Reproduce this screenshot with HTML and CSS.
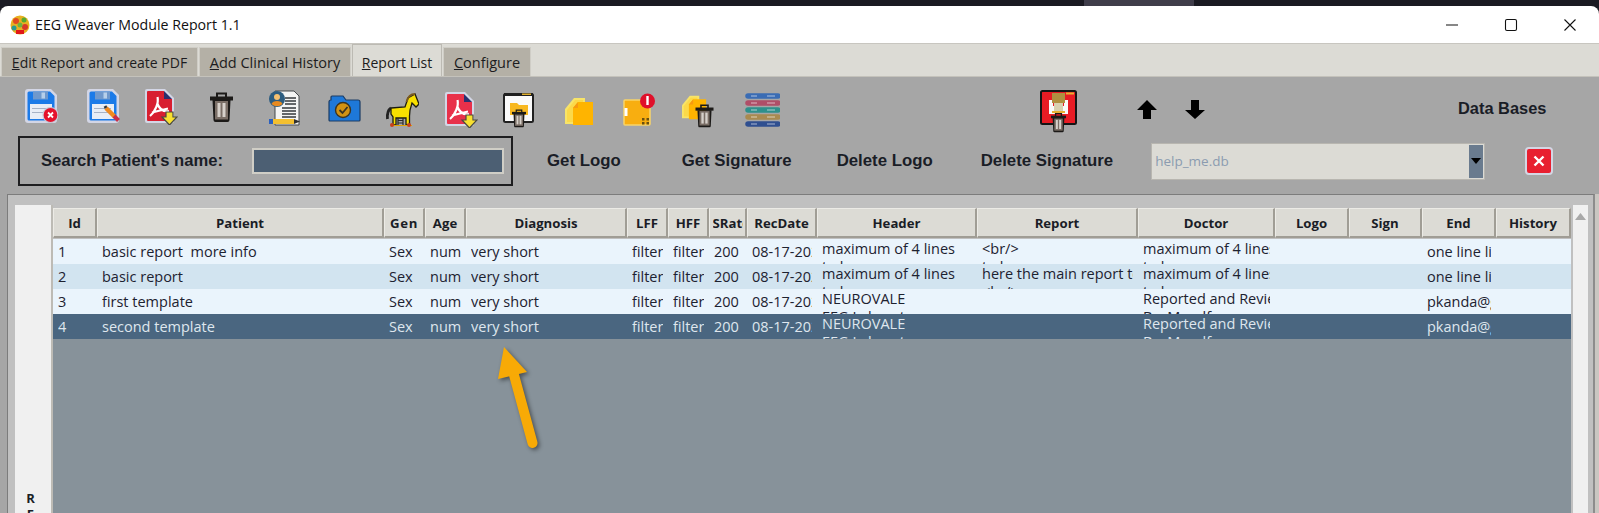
FILE: index.html
```html
<!DOCTYPE html>
<html lang="en">
<head>
<meta charset="utf-8">
<title>EEG Weaver Module Report 1.1</title>
<link rel="stylesheet" href="styles.css">
</head>
<body>
<svg class="defs" aria-hidden="true">
  <symbol id="trash" viewBox="0 0 23 30">
    <path d="M7 5V1.5h9V5" fill="none" stroke="#1c1a18" stroke-width="2"/>
    <rect x="0" y="4.5" width="23" height="4" fill="#1c1a18"/>
    <path d="M2.5 8h18l-1 20a2 2 0 0 1-2 2h-12a2 2 0 0 1-2-2z" fill="#1c1a18"/>
    <rect x="5" y="9" width="13" height="18.5" fill="#7a6e66"/>
    <rect x="7.5" y="11" width="3" height="14" fill="#d6d0ca"/>
    <rect x="12.5" y="11" width="3" height="14" fill="#d6d0ca"/>
  </symbol>
  <symbol id="floppy" viewBox="0 0 32 34">
    <path d="M3 0h23l6 6v25a3 3 0 0 1-3 3H3a3 3 0 0 1-3-3V3a3 3 0 0 1 3-3z" fill="#d3d6e6"/>
    <path d="M4 2.500h21l4.500 4.500v23a1.500 1.500 0 0 1-1.500 1.500H4a1.500 1.500 0 0 1-1.500-1.500V4a1.500 1.500 0 0 1 1.500-1.500z" fill="#1b7ae8"/>
    <rect x="8" y="2.500" width="15" height="8" fill="#6f98cc"/>
    <rect x="16.500" y="3.500" width="3.500" height="6" fill="#b6cfea"/>
    <rect x="5" y="15" width="22" height="15" fill="#e8edf6"/>
    <rect x="7" y="19" width="17" height="1" fill="#a6b2c6"/>
    <rect x="7" y="23" width="17" height="1" fill="#a6b2c6"/>
  </symbol>
  <symbol id="pdf" viewBox="0 0 33 36">
    <path d="M2 0h18l9 9v23a2 2 0 0 1-2 2H2a2 2 0 0 1-2-2V2a2 2 0 0 1 2-2z" fill="#d3d6e6"/>
    <path d="M3 2h16v8h8v21a1 1 0 0 1-1 1H3a1 1 0 0 1-1-1V3a1 1 0 0 1 1-1z" fill="currentColor"/>
    <path d="M19 2l8 8h-8z" fill="#2b2f6e"/>
    <path d="M5 27C10 23 14 14 12.500 8 M12.500 15C15 21 19 23 24 22 M7 23.500L23 19.500" fill="none" stroke="#fff" stroke-width="2.200"/>
    <path d="M21 23h7v5h4l-7.500 8L17 28h4z" fill="#f8e030" stroke="#4a4a40" stroke-width="1.200"/>
  </symbol>
  <symbol id="sheets" viewBox="0 0 29 29">
    <path d="M0 12L9 1h11v20L9 27H0z" fill="#f8e468"/>
    <path d="M2 13L10 3h8v16L9 25H2z" fill="#fbd94a"/>
    <path d="M8 11L13 5h15v23H8z" fill="#ffb400"/>
    <path d="M8 11l5-6v6z" fill="#f79a10"/>
  </symbol>
</svg>

<div class="topbar"><span class="pill"></span></div>

<div class="window">
  <header class="titlebar">
    <svg class="appicon" width="20" height="20" viewBox="0 0 20 20">
      <circle cx="10" cy="10" r="9.500" fill="#e8b020"/>
      <circle cx="6" cy="6" r="3" fill="#e04a20"/>
      <circle cx="14" cy="5" r="2.500" fill="#58a830"/>
      <circle cx="4" cy="13" r="2.500" fill="#2a9a90"/>
      <circle cx="15" cy="12" r="3" fill="#d83828"/>
      <circle cx="10" cy="10" r="2.500" fill="#70b040"/>
      <rect x="6" y="15" width="8" height="4" fill="#e01818"/>
    </svg>
    <span class="apptitle">EEG Weaver Module Report 1.1</span>
    <div class="winctl">
      <svg width="14" height="14" viewBox="0 0 14 14"><path d="M1 7h12" stroke="#111" stroke-width="1.200"/></svg>
      <svg width="14" height="14" viewBox="0 0 14 14"><rect x="1.500" y="1.500" width="11" height="11" rx="1.500" fill="none" stroke="#111" stroke-width="1.100"/></svg>
      <svg width="14" height="14" viewBox="0 0 14 14"><path d="M1.500 1.500l11 11M12.500 1.500l-11 11" stroke="#111" stroke-width="1.100"/></svg>
    </div>
  </header>

  <nav class="tabs">
    <div class="tab tab-edit"><u>E</u>dit Report and create PDF</div>
    <div class="tab tab-add"><u>A</u>dd Clinical History</div>
    <div class="tab tab-list active"><u>R</u>eport List</div>
    <div class="tab tab-conf"><u>C</u>onfigure</div>
  </nav>

  <main class="panel">
    <div class="toolbar">
      <svg class="ic ic-save1" viewBox="0 0 33 40"><use href="#floppy" x="0" y="1" width="32" height="34"/>
        <circle cx="25.500" cy="27" r="7.500" fill="#e5122c" stroke="#c9c9d6" stroke-width="1.200"/><path d="M23 24.500l5 5M28 24.500l-5 5" stroke="#fff" stroke-width="1.800"/></svg>
      <svg class="ic ic-save2" viewBox="0 0 33 40"><use href="#floppy" x="0" y="1" width="32" height="34"/>
        <path d="M19 20l9 9" stroke="#f08a20" stroke-width="4.500"/><path d="M27 28l4.500 4.500" stroke="#c8304a" stroke-width="4"/><path d="M19 20l-1-2" stroke="#333" stroke-width="3"/></svg>
      <svg class="ic ic-pdf1" viewBox="0 0 33 40"><use class="pdf-dark" href="#pdf" x="0" y="1" width="33" height="36"/></svg>
      <svg class="ic ic-trash" viewBox="0 0 23 40"><use href="#trash" x="0" y="4" width="23" height="30"/></svg>
      <svg class="ic ic-doc" viewBox="0 0 33 40">
        <path d="M7 3h19l5 5v29H7z" fill="#f4f4f4" stroke="#45484c" stroke-width="1"/>
        <path d="M17 10h11M17 13h11M17 16h11M14 20h14M14 23h14M14 26h14M14 29h14" stroke="#34383c" stroke-width="1.500"/>
        <circle cx="9" cy="11" r="8" fill="#2c5c80"/><circle cx="9" cy="9" r="3" fill="#f4c070"/><path d="M3.500 16c1-4 10-4 11 0a8 8 0 0 1-11 0z" fill="#e88a20"/>
        <rect x="1" y="31" width="4" height="5" fill="#2a60c0"/><rect x="5" y="31" width="21" height="5" fill="#f4c030"/><path d="M26 31l6 2.500-6 2.500z" fill="#303030"/>
      </svg>
      <svg class="ic ic-folder" viewBox="0 0 33 40">
        <path d="M3 12V9a1 1 0 0 1 1-1h11l3 4h12a2 2 0 0 1 2 2v18a1 1 0 0 1-1 1H2a1 1 0 0 1-1-1V14a2 2 0 0 1 2-2z" fill="#1e78d8" stroke="#1c3c64" stroke-width="1.200"/>
        <circle cx="15" cy="22" r="7.500" fill="#d09214" stroke="#3c3420" stroke-width="1.400"/><path d="M11.500 22l3 3 5-6" fill="none" stroke="#3c3420" stroke-width="1.800"/>
      </svg>
      <svg class="ic ic-horse" viewBox="0 0 34 40">
        <path d="M6 20C3 22 2 26 2.500 31" fill="none" stroke="#222" stroke-width="2.800"/>
        <path d="M6 20L20 19L23 10L30 6L34 16L31 19L27 15L25 22L24.500 28V37H21V30H11V37H8V29L6 26z" fill="#f8e000" stroke="#1c1c10" stroke-width="1.300"/>
        <path d="M30 6C26 6 23 8 21.500 14" fill="none" stroke="#7a5a20" stroke-width="2"/>
        <path d="M13 30V37M18 30V37M13 32.500H18M13 35H18" stroke="#2a2a2a" stroke-width="1.200"/>
        <path d="M6 37.500H27" stroke="#e0a000" stroke-width="1"/>
        <circle cx="7" cy="37" r="2" fill="#c8401c"/><circle cx="24" cy="37" r="2" fill="#c8401c"/>
      </svg>
      <svg class="ic ic-pdf2" viewBox="0 0 33 40"><use class="pdf-bright" href="#pdf" x="0" y="4" width="33" height="36"/></svg>
      <svg class="ic ic-doctrash" viewBox="0 0 32 40">
        <rect x="1" y="6" width="29" height="28" rx="1.500" fill="#fafafa" stroke="#202020" stroke-width="2"/>
        <rect x="1" y="5" width="29" height="3" fill="#202020"/><rect x="19" y="5.500" width="9" height="1.500" fill="#e0b030"/>
        <path d="M7 15h7l2 2h9v10H7z" fill="#f8b820"/>
        <use href="#trash" x="9" y="21" width="14" height="18.500"/>
      </svg>
      <svg class="ic ic-copy" viewBox="0 0 29 40"><use href="#sheets" x="0" y="9" width="29" height="29"/></svg>
      <svg class="ic ic-box" viewBox="0 0 33 40">
        <rect x="1" y="12" width="26" height="25" rx="1" fill="#f8ae10" stroke="#f8d468" stroke-width="1.500"/>
        <rect x="1.500" y="20" width="3" height="8" fill="#fff"/>
        <path d="M19 30h2.500v2.500H19zM23.500 30h2.500v2.500h-2.500zM19 34h2.500v2.500H19zM23.500 34h2.500v2.500h-2.500z" fill="#6a5010"/>
        <circle cx="24.500" cy="13" r="7.500" fill="#e0102a"/><rect x="23.300" y="8" width="2.400" height="9" fill="#fff"/>
      </svg>
      <svg class="ic ic-ytrash" viewBox="0 0 32 40">
        <use href="#sheets" x="0" y="7" width="25" height="25"/>
        <use href="#trash" x="13" y="16" width="19" height="23.500"/>
      </svg>
      <svg class="ic ic-stack" viewBox="0 0 35 40">
        <g stroke-width="5.500" fill="none" stroke-linecap="round">
          <path d="M3 8H33" stroke="#3a6cb4"/><path d="M3 15H33" stroke="#b04e68"/><path d="M3 22H33" stroke="#2e908c"/><path d="M3 29H33" stroke="#a88a50"/><path d="M3 36H33" stroke="#2f4f90"/>
        </g>
        <path d="M6 8H12M22 8H30M6 15H12M22 15H30M6 22H12M22 22H30M6 29H12M22 29H30M6 36H12M22 36H30" stroke="#ffffff" stroke-opacity=".4" stroke-width="1.500"/>
      </svg>
      <svg class="ic ic-delsig" viewBox="0 0 37 46">
        <rect x="1" y="3" width="35" height="33" rx="1.500" fill="#e81c24" stroke="#151515" stroke-width="2"/>
        <path d="M9 12h4v6h11v-6h4v14h-19z" fill="#fafafa"/>
        <rect x="26" y="4.500" width="8" height="2" fill="#e8b030"/>
        <rect x="12" y="5" width="13" height="10" fill="#b09040"/><rect x="14" y="15" width="9" height="8" fill="#d8d0b0"/><rect x="12" y="23" width="13" height="2" fill="#e8b030"/>
        <use href="#trash" x="11" y="24" width="15" height="21"/>
      </svg>
      <svg class="ic ic-up" viewBox="0 0 20 40"><path d="M10 12L20 22H14V31H6V22H0z" fill="#000"/></svg>
      <svg class="ic ic-down" viewBox="0 0 20 40"><path d="M6 12H14V22H20L10 31L0 22H6z" fill="#000"/></svg>
      <span class="dbtitle">Data Bases</span>
    </div>

    <div class="actions">
      <div class="search">
        <label class="search-label">Search Patient's name:</label>
        <div class="search-input"></div>
      </div>
      <span class="act act-getlogo">Get Logo</span>
      <span class="act act-getsig">Get Signature</span>
      <span class="act act-dellogo">Delete Logo</span>
      <span class="act act-delsig">Delete Signature</span>
      <div class="combo">
        <span class="combo-text">help_me.db</span>
        <span class="combo-btn"><svg width="10" height="6" viewBox="0 0 10 6"><path d="M0 0h10L5 6z" fill="#000"/></svg></span>
      </div>
      <button class="xbtn" type="button"><svg width="14" height="14" viewBox="0 0 14 14"><path d="M2.500 2.500l9 9M11.500 2.500l-9 9" stroke="#fff" stroke-width="2.400"/></svg></button>
    </div>

    <section class="frame">
      <div class="rowhead"><span>R</span><span>E</span><span>P</span></div>
      <div class="table">
        <div class="row head">
          <div class="th">Id</div><div class="th">Patient</div><div class="th th-gen">Gen</div><div class="th">Age</div><div class="th">Diagnosis</div><div class="th">LFF</div><div class="th">HFF</div><div class="th"><span class="th-clip">SRate</span></div><div class="th">RecDate</div><div class="th">Header</div><div class="th">Report</div><div class="th">Doctor</div><div class="th">Logo</div><div class="th">Sign</div><div class="th">End</div><div class="th">History</div>
        </div>
        <div class="row odd">
          <div class="td">1</div><div class="td">basic report  more info</div><div class="td">Sex</div><div class="td">number</div><div class="td">very short</div><div class="td">filter Hz</div><div class="td">filter Hz</div><div class="td">200</div><div class="td">08-17-2021</div><div class="td multi">maximum of 4 lines
to be</div><div class="td multi">&lt;br/&gt;
to be</div><div class="td multi">maximum of 4 lines
to be</div><div class="td"></div><div class="td"></div><div class="td">one line limit</div><div class="td"></div>
        </div>
        <div class="row even">
          <div class="td">2</div><div class="td">basic report</div><div class="td">Sex</div><div class="td">number</div><div class="td">very short</div><div class="td">filter Hz</div><div class="td">filter Hz</div><div class="td">200</div><div class="td">08-17-2021</div><div class="td multi">maximum of 4 lines
to be</div><div class="td multi">here the main report text
&lt;br/&gt;</div><div class="td multi">maximum of 4 lines
to be</div><div class="td"></div><div class="td"></div><div class="td">one line limit</div><div class="td"></div>
        </div>
        <div class="row odd">
          <div class="td">3</div><div class="td">first template</div><div class="td">Sex</div><div class="td">number</div><div class="td">very short</div><div class="td">filter Hz</div><div class="td">filter Hz</div><div class="td">200</div><div class="td">08-17-2021</div><div class="td multi">NEUROVALE
EEG Laboratory</div><div class="td multi"></div><div class="td multi">Reported and Reviewed
By: Myself</div><div class="td"></div><div class="td"></div><div class="td">pkanda@gmail.com</div><div class="td"></div>
        </div>
        <div class="row selected">
          <div class="td">4</div><div class="td">second template</div><div class="td">Sex</div><div class="td">number</div><div class="td">very short</div><div class="td">filter Hz</div><div class="td">filter Hz</div><div class="td">200</div><div class="td">08-17-2021</div><div class="td multi">NEUROVALE
EEG Laboratory</div><div class="td multi"></div><div class="td multi">Reported and Reviewed
By: Myself</div><div class="td"></div><div class="td"></div><div class="td">pkanda@gmail.com</div><div class="td"></div>
        </div>
      </div>
      <div class="scrollbar"><svg width="11" height="7" viewBox="0 0 11 7"><path d="M5.500 0L11 7H0z" fill="#a8a8a8"/></svg></div>
    </section>
  </main>
</div>

<svg class="callout" width="60" height="110" viewBox="0 0 60 110">
  <path d="M20 32L38.500 100" stroke="#f8aa06" stroke-width="10" stroke-linecap="round" fill="none"/>
  <path d="M10 4L33 29L4 36z" fill="#f8aa06"/>
</svg>
</body>
</html>
```

FILE: styles.css
```css
* { box-sizing: border-box; }

html, body {
  margin: 0;
  height: 513px;
  overflow: hidden;
}

body {
  position: relative;
  background: #1a1a22;
  font-family: "Open Sans", "Noto Sans", sans-serif;
  color: #1a1d26;
}

.defs { position: absolute; width: 0; height: 0; }

/* desktop strip above the window */
.topbar { height: 6px; padding-left: 1084px; }
.pill {
  display: block;
  width: 110px;
  height: 6px;
  background: #3f3d4a;
}

.window {
  background: #fff;
  border-radius: 8px 8px 0 0;
  overflow: hidden;
  height: 507px;
}

/* title bar */
.titlebar {
  display: flex;
  align-items: center;
  height: 38px;
  padding-left: 10px;
  border-bottom: 1px solid #c8c6c0;
}
.appicon { margin-top: 1px; }
.apptitle {
  margin-left: 5px;
  font-size: 14.200px;
  color: #111;
}
.winctl {
  margin-left: auto;
  display: flex;
  gap: 45px;
  padding-right: 22px;
}

/* tabs */
.tabs {
  display: flex;
  align-items: flex-end;
  height: 33px;
  padding-left: 1px;
  background: #dcdbd5;
  border-bottom: 1px solid #c4c2bb;
}
.tab {
  height: 29px;
  padding-top: 5px;
  font-size: 14px;
  line-height: 20px;
  text-align: center;
  background: #b4b0a6;
  border: 1px solid #cfcdc6;
  border-bottom: none;
  color: #1c1c20;
  margin-right: 1px;
}
.tab.active { height: 32px; padding-top: 8px; background: #dcdbd5; border-color: #bcbab3; }
.tab-edit { width: 197px; }
.tab-add { width: 152px; font-size: 14.500px; }
.tab-list { width: 90px; }
.tab-conf { width: 88px; font-size: 14.500px; }

/* grey panel */
.panel {
  height: 436px;
  background: #a6a6a6;
  padding-top: 11px;
}

.toolbar {
  display: flex;
  align-items: flex-start;
  height: 47px;
  padding-left: 25px;
}
.ic { display: block; height: 40px; flex: none; }
.pdf-dark { color: #d81e30; }
.pdf-bright { color: #e8304a; }
.ic-save1 { width: 33px; }
.ic-save2 { width: 33px; margin-left: 29px; }
.ic-pdf1 { width: 33px; margin-left: 25px; }
.ic-trash { width: 23px; margin-left: 32px; }
.ic-doc { width: 33px; margin-left: 35px; }
.ic-folder { width: 33px; margin-left: 27px; }
.ic-horse { width: 34px; margin-left: 24px; }
.ic-pdf2 { width: 33px; margin-left: 26px; }
.ic-doctrash { width: 32px; margin-left: 25px; }
.ic-copy { width: 29px; margin-left: 30px; }
.ic-box { width: 33px; margin-left: 29px; }
.ic-ytrash { width: 32px; margin-left: 26px; }
.ic-stack { width: 35px; margin-left: 31px; }
.ic-delsig { width: 37px; height: 46px; margin-left: 260px; }
.ic-up { width: 20px; margin-left: 60px; }
.ic-down { width: 20px; margin-left: 28px; }
.dbtitle {
  margin-left: 253px;
  font: bold 16.400px/40px "Liberation Sans", sans-serif;
}

/* search + actions */
.actions {
  display: flex;
  align-items: center;
  height: 50px;
  margin-top: 1px;
  padding-left: 18px;
}
.search {
  display: flex;
  align-items: center;
  flex: none;
  width: 495px;
  height: 50px;
  padding-left: 21px;
  border: 2px solid #1e1e20;
}
.search-label {
  flex: none;
  width: 211px;
  font: bold 16.600px "Liberation Sans", sans-serif;
}
.search-input {
  width: 252px;
  height: 26px;
  background: #4c5f73;
  border: 2px solid #d0cec6;
}
.act {
  flex: none;
  font: bold 16.800px "Liberation Sans", sans-serif;
}
.act-getlogo { margin-left: 34px; }
.act-getsig { margin-left: 61px; }
.act-dellogo { margin-left: 45px; }
.act-delsig { margin-left: 48px; }
.combo {
  display: flex;
  flex: none;
  width: 334px;
  height: 37px;
  margin-left: 38px;
  background: #dcdbd5;
  border: 1px solid #b8b6b0;
}
.combo-text {
  flex: 1;
  padding-left: 3px;
  font-size: 13.500px;
  line-height: 35px;
  color: #8b9bb0;
}
.combo-btn {
  display: flex;
  align-items: center;
  justify-content: center;
  width: 14px;
  margin: 1px;
  background: #6a7b8e;
}
.xbtn {
  display: flex;
  align-items: center;
  justify-content: center;
  flex: none;
  width: 28px;
  height: 28px;
  margin-left: 40px;
  padding: 0;
  background: #e81f30;
  border: 2px solid #d4d6e4;
  border-radius: 4px;
}

/* table frame */
.frame {
  display: flex;
  height: 400px;
  margin-top: 8px;
  margin-left: 7px;
  margin-right: 4px;
  padding: 10px 5px 0 7px;
  background: #c0c0c0;
  border-top: 1px solid #7c7c7c;
  border-left: 1px solid #7c7c7c;
  border-right: 2px solid #8c8c8c;
  box-shadow: 4px 0 0 #c9c6c1;
}
.rowhead {
  display: flex;
  flex-direction: column;
  align-items: center;
  width: 38px;
  padding: 285px 5px 0 0;
  background: #f0f0f0;
  border-right: 2px solid #bdbbb5;
  font-size: 13px;
  font-weight: 700;
  line-height: 16px;
}
.table {
  --cols: 44px 287px 41px 41px 161px 41px 41px 38px 70px 160px 161px 137px 74px 73px 74px 75px;
  width: 1518px;
  flex: none;
  background: #87929a;
}
.row {
  display: grid;
  grid-template-columns: var(--cols);
  height: 25px;
  font-size: 14.500px;
  line-height: 25px;
}
.row.head {
  height: 34px;
  padding-top: 3px;
  background: #c0c0c0;
  font-size: 13.200px;
}
.th {
  height: 30px;
  overflow: hidden;
  font-weight: 700;
  line-height: 28px;
  text-align: center;
  white-space: nowrap;
  background: #dcdbd5;
  border: 1px solid #ecebe6;
  border-right: 2px solid #a09d95;
  border-bottom: 2px solid #a09d95;
}
.th-gen { letter-spacing: .6px; }
.th-clip {
  display: block;
  width: 30px;
  margin: 0 auto;
  overflow: hidden;
  text-align: left;
}
.td {
  min-width: 0;
  margin: 0 5px;
  overflow: hidden;
  white-space: pre;
  color: #1d2230;
}
.td.multi { padding-top: 1px; line-height: 18px; }
.odd { background: #eaf4fc; }
.even { background: #d2e4f0; }
.selected { background: #4a6680; }
.selected .td { color: #dfe6ee; }

.scrollbar {
  display: flex;
  justify-content: center;
  width: 15px;
  flex: none;
  margin-left: 2px;
  padding-top: 8px;
  background: #f0f0f0;
}
.scrollbar svg { display: block; }

/* annotation drawn over the screenshot */
.callout {
  position: absolute;
  left: 494px;
  top: 343px;
  filter: drop-shadow(2px 2px 2px rgba(0, 0, 0, .45));
}
```
